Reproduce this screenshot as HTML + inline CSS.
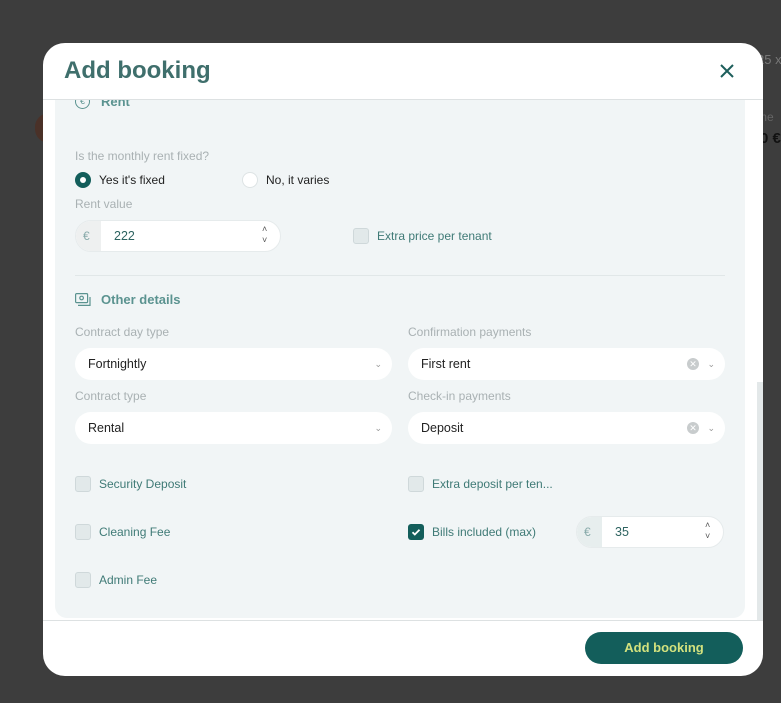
<!DOCTYPE html>
<html><head><meta charset="utf-8"><style>
*{box-sizing:border-box;margin:0;padding:0}
body{width:781px;height:703px;background:#3d3d3d;font-family:"Liberation Sans",sans-serif;position:relative;overflow:hidden}
.abs{position:absolute}
.modal{position:absolute;left:43px;top:43px;width:720px;height:633px;background:#fff;border-radius:22px;overflow:hidden}
.title{position:absolute;left:21px;top:14px;font-size:24px;font-weight:bold;color:#3f6f6c}
.lbl{position:absolute;font-size:12px;color:#a9b1b3;white-space:nowrap}
.txt{position:absolute;font-size:12px;color:#222;white-space:nowrap}
.gt{position:absolute;font-size:12px;color:#3f7a76;white-space:nowrap}
.sel{position:absolute;height:32px;background:#fff;border-radius:16px;font-size:12.5px;color:#222;padding:9px 13px}
.chev{position:absolute;top:11px;font-size:9px;color:#999}
.clr{position:absolute;top:10px;width:12px;height:12px;border-radius:50%;background:#c8cccd;color:#fff;font-size:9px;line-height:12px;text-align:center}
.cb{position:absolute;width:16px;height:16px;border:1px solid #cfd8da;background:#e2e9ea;border-radius:3px}
.sec{position:absolute;font-size:13px;font-weight:bold;color:#5b9390;white-space:nowrap}
.bg{position:absolute;white-space:nowrap}
</style></head><body>
<div class="abs" style="left:35px;top:113px;width:14px;height:30px;border-radius:15px 0 0 15px;background:#4a3128"></div>
<div class="bg" style="left:757px;top:52px;font-size:13px;color:#777">25 x</div>
<div class="bg" style="left:757px;top:110px;font-size:12px;color:#666">me</div>
<div class="bg" style="left:760px;top:130px;font-size:15px;font-weight:bold;color:#111">0 €</div>
<div class="modal">
 <div class="title">Add booking</div>
 <svg class="abs" style="left:677px;top:21px" width="14" height="14" viewBox="0 0 14 14"><path d="M1 1L13 13M13 1L1 13" stroke="#1d5e5b" stroke-width="2"/></svg>
 <div class="abs" style="left:12px;top:57px;width:690px;height:518px;background:#f1f5f6;border-radius:0 0 12px 12px"></div>
 <div class="abs" style="left:714px;top:339px;width:6px;height:238px;background:#e3e8e9"></div>
 <div class="abs" style="left:0;top:57px;width:720px;height:12px;overflow:hidden">
  <div class="abs" style="left:32px;top:-6px;width:15px;height:15px;border:1.5px solid #5b9390;border-radius:50%;font-size:9px;color:#5b9390;text-align:center;line-height:12px">€</div>
  <div class="sec" style="left:58px;top:-6px">Rent</div>
 </div>
 <div class="abs" style="left:0;top:56px;width:720px;height:1px;background:#dde1e2"></div>
 <div class="lbl" style="left:32px;top:106px">Is the monthly rent fixed?</div>
 <div class="abs" style="left:32px;top:129px;width:16px;height:16px;border-radius:50%;background:#135e5b"><div class="abs" style="left:5px;top:5px;width:6px;height:6px;border-radius:50%;background:#fff"></div></div>
 <div class="txt" style="left:56px;top:130px">Yes it's fixed</div>
 <div class="abs" style="left:199px;top:129px;width:16px;height:16px;border-radius:50%;background:#fff;border:1px solid #dde3e4"></div>
 <div class="txt" style="left:223px;top:130px">No, it varies</div>
 <div class="lbl" style="left:32px;top:154px">Rent value</div>
 <div class="abs" style="left:32px;top:177px;width:206px;height:32px;background:#fff;border-radius:16px;overflow:hidden;border:1px solid #e6ebec">
  <div class="abs" style="left:0;top:0;width:25px;height:32px;background:#eef0f0;color:#8aa;font-size:12px;padding:8px 7px">€</div>
  <div class="abs" style="left:38px;top:8px;font-size:12.5px;color:#2d6360">222</div>
  <div class="abs" style="left:186px;top:3px;font-size:9px;color:#555;line-height:11px">˄<br>˅</div>
 </div>
 <div class="cb" style="left:310px;top:185px"></div>
 <div class="gt" style="left:334px;top:186px">Extra price per tenant</div>
 <div class="abs" style="left:32px;top:232px;width:650px;height:1px;background:#e1e7e8"></div>
 <svg class="abs" style="left:32px;top:250px" width="17" height="14" viewBox="0 0 17 14" fill="none" stroke="#5b9390" stroke-width="1.2"><rect x="0.6" y="0.6" width="12" height="9" rx="1"/><circle cx="6.6" cy="5" r="1.8"/><path d="M3 12.4h12V4"/></svg>
 <div class="sec" style="left:58px;top:249px">Other details</div>
 <div class="lbl" style="left:32px;top:282px">Contract day type</div>
 <div class="sel" style="left:32px;top:305px;width:317px">Fortnightly<span class="chev" style="right:10px">⌄</span></div>
 <div class="lbl" style="left:365px;top:282px">Confirmation payments</div>
 <div class="sel" style="left:365px;top:305px;width:317px">First rent<span class="clr" style="right:26px">✕</span><span class="chev" style="right:10px">⌄</span></div>
 <div class="lbl" style="left:32px;top:346px">Contract type</div>
 <div class="sel" style="left:32px;top:369px;width:317px">Rental<span class="chev" style="right:10px">⌄</span></div>
 <div class="lbl" style="left:365px;top:346px">Check-in payments</div>
 <div class="sel" style="left:365px;top:369px;width:317px">Deposit<span class="clr" style="right:26px">✕</span><span class="chev" style="right:10px">⌄</span></div>
 <div class="cb" style="left:32px;top:433px"></div><div class="gt" style="left:56px;top:434px">Security Deposit</div>
 <div class="cb" style="left:365px;top:433px"></div><div class="gt" style="left:389px;top:434px">Extra deposit per ten...</div>
 <div class="cb" style="left:32px;top:481px"></div><div class="gt" style="left:56px;top:482px">Cleaning Fee</div>
 <div class="abs" style="left:365px;top:481px;width:16px;height:16px;background:#135e5b;border-radius:3px"><svg width="16" height="16" viewBox="0 0 16 16"><path d="M4.5 8.2l2.3 2.3 4.7-4.8" stroke="#fff" stroke-width="1.8" fill="none"/></svg></div>
 <div class="gt" style="left:389px;top:482px">Bills included (max)</div>
 <div class="abs" style="left:533px;top:473px;width:148px;height:32px;background:#fff;border-radius:16px;overflow:hidden;border:1px solid #e6ebec">
  <div class="abs" style="left:0;top:0;width:25px;height:32px;background:#e7eeee;color:#8aa;font-size:12px;padding:8px 7px">€</div>
  <div class="abs" style="left:38px;top:8px;font-size:12.5px;color:#2d6360">35</div>
  <div class="abs" style="left:128px;top:3px;font-size:9px;color:#555;line-height:11px">˄<br>˅</div>
 </div>
 <div class="cb" style="left:32px;top:529px"></div><div class="gt" style="left:56px;top:530px">Admin Fee</div>
 <div class="abs" style="left:0;top:577px;width:720px;height:1px;background:#dde1e2"></div>
 <div class="abs" style="left:542px;top:589px;width:158px;height:32px;background:#135e5b;border-radius:16px;color:#d3e27e;font-size:13px;font-weight:bold;text-align:center;line-height:32px">Add booking</div>
</div>
</body></html>
